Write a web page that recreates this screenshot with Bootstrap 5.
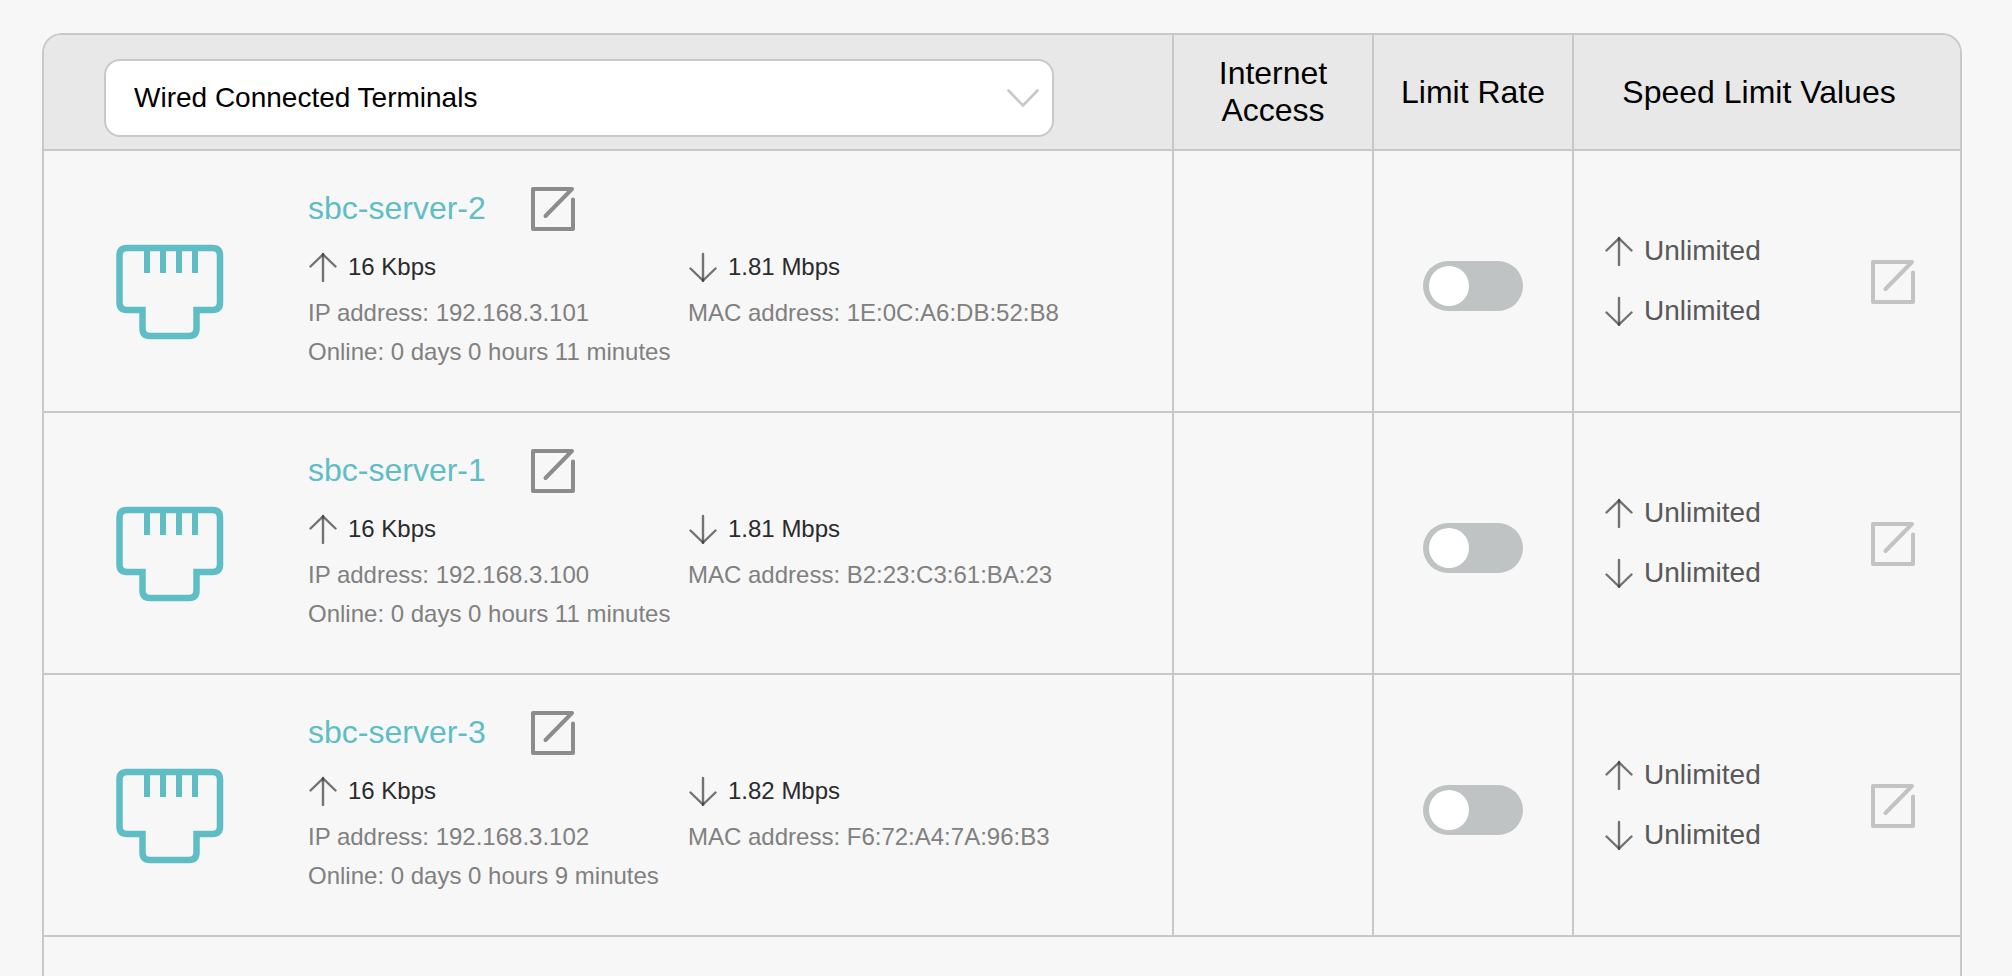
<!DOCTYPE html>
<html lang="en">
<head>
<meta charset="utf-8">
<meta name="viewport" content="width=device-width, initial-scale=1">
<title>Connected Terminals</title>
<link href="https://cdn.jsdelivr.net/npm/bootstrap@5.3.0/dist/css/bootstrap.min.css" rel="stylesheet">
<style>
  :root { --line: #c8c8c8; --page: #f7f7f7; --accent: #5fbec5; }
  body { background: var(--page); color: #000; font-family: "Liberation Sans", Arial, sans-serif; padding: 33px 50px 0 42px; }
  .panel { border: 2px solid var(--line); border-bottom: 0; border-radius: 20px 20px 0 0; overflow: hidden; min-height: calc(100vh - 33px); }
  .terminals { width: 100%; table-layout: fixed; border-collapse: separate; border-spacing: 0; }
  .terminals th, .terminals td { border: 0 solid var(--line); border-bottom-width: 2px; padding: 0; }
  .terminals th + th, .terminals td { border-left-width: 2px; }
  .terminals thead th { background: #e8e8e8; font-size: 32px; font-weight: 400; line-height: 37px; text-align: center; vertical-align: middle; }
  .terminals thead th.pick-cell { padding: 24px 118px 12px 60px; }
  .terminals thead th.speed-head { padding-right: 16px; }
  .terminals tbody th { font-weight: 400; vertical-align: top; }
  .col-toggle { width: 200px; }
  .col-speed { width: 388px; }
  .pick { height: 78px; font-size: 28px; color: #000; border: 2px solid var(--line); border-radius: 16px; padding: 0 60px 0 28px;
    background: #fff url("data:image/svg+xml,%3Csvg xmlns='http://www.w3.org/2000/svg' viewBox='0 0 32 18'%3E%3Cpath d='M1.5 1.5 16 16.5 30.5 1.5' fill='none' stroke='%23c8c8c8' stroke-width='2.6' stroke-linecap='round'/%3E%3C/svg%3E") no-repeat right 13px center / 32px 18px; }
  .device { padding: 34px 24px 40px 71px; }
  .port { width: 109px; height: 96px; margin: 59px 84px 0 0; }
  .device-name { font-size: 32px; line-height: 46px; color: var(--accent); text-decoration: none; margin-right: 44px; }
  .edit { width: 46px; height: 46px; color: #8c8c8c; }
  .edit-soft { color: #c3c3c3; }
  .facts { display: grid; grid-template-columns: 380px 1fr; font-size: 24px; line-height: 39px; color: #808080; }
  .rate { line-height: 30px; color: #2b2b2b; margin: 21px 0 11px; padding-left: 1px; gap: 11px; }
  .arrow { width: 28px; height: 30px; }
  .switch-cell { padding-top: 10px !important; }
  .form-switch .form-check-input.toggle { width: 100px; height: 50px; border: 0; border-radius: 25px; background-color: #bfc3c4; background-size: 50px 50px; background-position: left center;
    background-image: url("data:image/svg+xml,%3Csvg xmlns='http://www.w3.org/2000/svg' viewBox='0 0 50 50'%3E%3Ccircle cx='26' cy='25' r='20' fill='%23fff'/%3E%3C/svg%3E"); }
  .limits { padding: 0 44px 0 31px; font-size: 28px; line-height: 60px; color: #595959; }
  .limit-line { gap: 11px; }
</style>
</head>
<body>
<svg class="d-none" aria-hidden="true">
  <symbol id="i-port" viewBox="0 0 109 96">
    <g fill="none" stroke="currentColor" stroke-width="6.5">
      <path d="M12 4H97.500Q105 4 105 11.500V58.500Q105 66 97.500 66H81.500V84.500Q81.500 92 74 92H35Q27.500 92 27.500 84.500V66H12Q4.500 66 4.500 58.500V11.500Q4.500 4 12 4Z"/>
      <path d="M32 1V29M48 1V29M64 1V29M80 1V29" stroke-width="6"/>
    </g>
  </symbol>
  <symbol id="i-edit" viewBox="0 0 46 46">
    <g fill="none" stroke="currentColor" stroke-width="4" stroke-linecap="round" stroke-linejoin="round">
      <path d="M15.500 31 42 4H3V44H43V14.500"/>
    </g>
  </symbol>
  <symbol id="i-up" viewBox="0 0 28 30">
    <g fill="none" stroke="#333" stroke-width="2.4" stroke-linecap="round">
      <path d="M14 2V29" opacity=".68"/><path d="M1.500 14.500 14 2.500 26.500 14.500" opacity=".68"/>
    </g>
  </symbol>
  <symbol id="i-down" viewBox="0 0 28 30">
    <g fill="none" stroke="#333" stroke-width="2.4" stroke-linecap="round">
      <path d="M14 2V29" opacity=".68"/><path d="M1.500 16.500 14 28.500 26.500 16.500" opacity=".68"/>
    </g>
  </symbol>
</svg>

<main class="panel">
  <table class="terminals">
    <colgroup><col><col class="col-toggle"><col class="col-toggle"><col class="col-speed"></colgroup>
    <thead>
      <tr>
        <th scope="col" class="pick-cell">
          <select class="form-select pick" aria-label="Terminal type"><option>Wired Connected Terminals</option></select>
        </th>
        <th scope="col">Internet<br>Access</th>
        <th scope="col">Limit Rate</th>
        <th scope="col" class="speed-head">Speed Limit Values</th>
      </tr>
    </thead>
    <tbody>
      <tr>
        <th scope="row">
          <div class="device d-flex">
            <svg class="port flex-shrink-0" color="#5fbec5"><use href="#i-port"/></svg>
            <div class="flex-grow-1">
              <div class="d-flex align-items-center"><a class="device-name" href="#">sbc-server-2</a><button type="button" class="btn border-0 p-0 edit d-flex" aria-label="Rename sbc-server-2"><svg class="w-100 h-100"><use href="#i-edit"/></svg></button></div>
              <div class="facts">
                <div class="rate d-flex"><svg class="arrow"><use href="#i-up"/></svg><span>16 Kbps</span></div>
                <div class="rate d-flex"><svg class="arrow"><use href="#i-down"/></svg><span>1.81 Mbps</span></div>
                <div>IP address: 192.168.3.101</div><div>MAC address: 1E:0C:A6:DB:52:B8</div>
                <div>Online: 0 days 0 hours 11 minutes</div>
              </div>
            </div>
          </div>
        </th>
        <td></td>
        <td class="switch-cell"><div class="form-check form-switch d-flex justify-content-center p-0 m-0"><input class="form-check-input toggle m-0" type="checkbox" role="switch" aria-label="Limit rate of sbc-server-2"></div></td>
        <td>
          <div class="limits d-flex align-items-center justify-content-between">
            <div>
              <div class="limit-line d-flex align-items-center"><svg class="arrow"><use href="#i-up"/></svg><span>Unlimited</span></div>
              <div class="limit-line d-flex align-items-center"><svg class="arrow"><use href="#i-down"/></svg><span>Unlimited</span></div>
            </div>
            <button type="button" class="btn border-0 p-0 edit edit-soft d-flex" aria-label="Edit speed limit of sbc-server-2"><svg class="w-100 h-100"><use href="#i-edit"/></svg></button>
          </div>
        </td>
      </tr>
      <tr>
        <th scope="row">
          <div class="device d-flex">
            <svg class="port flex-shrink-0" color="#5fbec5"><use href="#i-port"/></svg>
            <div class="flex-grow-1">
              <div class="d-flex align-items-center"><a class="device-name" href="#">sbc-server-1</a><button type="button" class="btn border-0 p-0 edit d-flex" aria-label="Rename sbc-server-1"><svg class="w-100 h-100"><use href="#i-edit"/></svg></button></div>
              <div class="facts">
                <div class="rate d-flex"><svg class="arrow"><use href="#i-up"/></svg><span>16 Kbps</span></div>
                <div class="rate d-flex"><svg class="arrow"><use href="#i-down"/></svg><span>1.81 Mbps</span></div>
                <div>IP address: 192.168.3.100</div><div>MAC address: B2:23:C3:61:BA:23</div>
                <div>Online: 0 days 0 hours 11 minutes</div>
              </div>
            </div>
          </div>
        </th>
        <td></td>
        <td class="switch-cell"><div class="form-check form-switch d-flex justify-content-center p-0 m-0"><input class="form-check-input toggle m-0" type="checkbox" role="switch" aria-label="Limit rate of sbc-server-1"></div></td>
        <td>
          <div class="limits d-flex align-items-center justify-content-between">
            <div>
              <div class="limit-line d-flex align-items-center"><svg class="arrow"><use href="#i-up"/></svg><span>Unlimited</span></div>
              <div class="limit-line d-flex align-items-center"><svg class="arrow"><use href="#i-down"/></svg><span>Unlimited</span></div>
            </div>
            <button type="button" class="btn border-0 p-0 edit edit-soft d-flex" aria-label="Edit speed limit of sbc-server-1"><svg class="w-100 h-100"><use href="#i-edit"/></svg></button>
          </div>
        </td>
      </tr>
      <tr>
        <th scope="row">
          <div class="device d-flex">
            <svg class="port flex-shrink-0" color="#5fbec5"><use href="#i-port"/></svg>
            <div class="flex-grow-1">
              <div class="d-flex align-items-center"><a class="device-name" href="#">sbc-server-3</a><button type="button" class="btn border-0 p-0 edit d-flex" aria-label="Rename sbc-server-3"><svg class="w-100 h-100"><use href="#i-edit"/></svg></button></div>
              <div class="facts">
                <div class="rate d-flex"><svg class="arrow"><use href="#i-up"/></svg><span>16 Kbps</span></div>
                <div class="rate d-flex"><svg class="arrow"><use href="#i-down"/></svg><span>1.82 Mbps</span></div>
                <div>IP address: 192.168.3.102</div><div>MAC address: F6:72:A4:7A:96:B3</div>
                <div>Online: 0 days 0 hours 9 minutes</div>
              </div>
            </div>
          </div>
        </th>
        <td></td>
        <td class="switch-cell"><div class="form-check form-switch d-flex justify-content-center p-0 m-0"><input class="form-check-input toggle m-0" type="checkbox" role="switch" aria-label="Limit rate of sbc-server-3"></div></td>
        <td>
          <div class="limits d-flex align-items-center justify-content-between">
            <div>
              <div class="limit-line d-flex align-items-center"><svg class="arrow"><use href="#i-up"/></svg><span>Unlimited</span></div>
              <div class="limit-line d-flex align-items-center"><svg class="arrow"><use href="#i-down"/></svg><span>Unlimited</span></div>
            </div>
            <button type="button" class="btn border-0 p-0 edit edit-soft d-flex" aria-label="Edit speed limit of sbc-server-3"><svg class="w-100 h-100"><use href="#i-edit"/></svg></button>
          </div>
        </td>
      </tr>
    </tbody>
  </table>
</main>
<script src="https://cdn.jsdelivr.net/npm/bootstrap@5.3.0/dist/js/bootstrap.bundle.min.js"></script>
</body>
</html>
